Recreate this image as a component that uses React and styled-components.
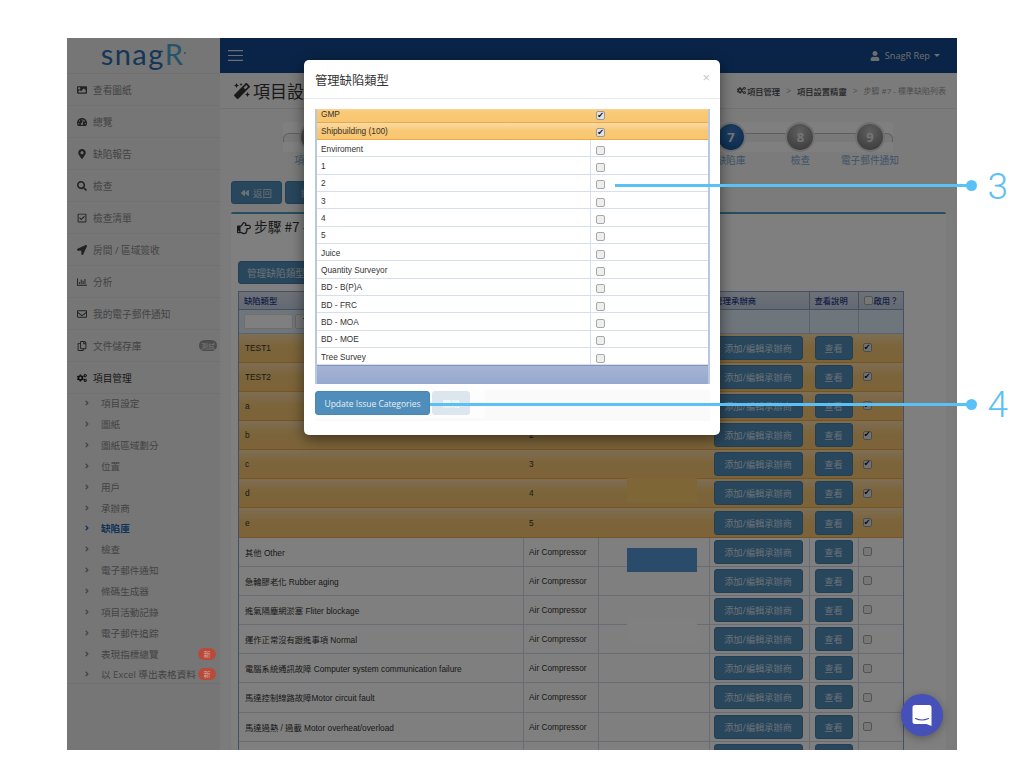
import React from "react";
import styled, { createGlobalStyle } from "styled-components";
import {
  FaImage, FaTachometerAlt, FaMapMarkerAlt, FaSearch, FaRegCheckSquare, FaLocationArrow,
  FaRegChartBar, FaRegEnvelope, FaRegCopy, FaCogs, FaMagic, FaRegHandPointRight,
  FaBackward, FaUser, FaAngleRight, FaFilter,
} from "react-icons/fa";

const CJK = `"Noto Sans CJK TC", sans-serif`;
const SANS = `"Liberation Sans", ${CJK}`;
const OPEN = `"Open Sans", ${CJK}`;

const Global = createGlobalStyle`
  html, body { margin: 0; padding: 0; background: #fff; }
  * { box-sizing: border-box; }
  #root { position: relative; width: 1024px; height: 768px; overflow: hidden; font-family: ${OPEN}; }
`;

const Frame = styled.div`
  position: relative; display: flex; width: 890px; height: 712px; margin: 38px 0 0 67px; overflow: hidden;
  background: #f6f6f6; isolation: isolate;
`;
const Sidebar = styled.aside`
  width: 153px; flex: none; background: #ececec; display: flex; flex-direction: column;
`;
const Logo = styled.div`
  height: 36px; flex: none; display: flex; justify-content: center; align-items: center; border-bottom: 1px solid #e0e0e0;
  font: 400 29px/36px Lato, sans-serif; letter-spacing: 1.4px; color: #2c6cb0; padding-bottom: 3px; overflow: visible;
  span { color: #4aa8d0; }
  i { width: 2px; height: 2px; border-radius: 50%; background: #4aa8d0; margin: 0 0 3px 0; }
`;
const NavItem = styled.div`
  height: 32px; flex: none; display: flex; align-items: center; padding: 0 3px 0 10px; gap: 6px;
  border-bottom: 1px solid #e2e2e2; font-size: 9.7px; color: ${p => p.$strong ? "#333" : "#888"};
  svg { width: 10px; height: 10px; flex: none; color: ${p => p.$strong ? "#222" : "#444"}; }
`;
const SubList = styled.div`
  display: flex; flex-direction: column; border-bottom: 1px solid #e2e2e2; height: 291px; flex: none;
  margin-top: -1px;
`;
const SubItem = styled.div`
  height: 20.85px; flex: none; display: flex; align-items: center; padding: 0 4px 0 16px; font-size: 9.6px;
  color: ${p => p.$active ? "#2266b0" : "#888"}; font-weight: ${p => p.$active ? 700 : 400};
  svg { width: 8px; height: 8px; margin-right: 10px; flex: none; }
`;
const Grow = styled.span`flex: 1;`;
const NavLabel = styled.span`white-space: nowrap; flex: 1;`;
const Badge = styled.span`
  flex: none; width: 18px; height: 11px; border-radius: 6px; display: flex; align-items: center; justify-content: center;
  font-size: 7px; color: #eee; background: #999;
`;
const RedBadge = styled(Badge)`
  position: relative; z-index: 6; background: #b84a3a; color: #d8a8a0; height: 12px;
`;
const Main = styled.main`flex: 1; min-width: 0; display: flex; flex-direction: column;`;
const TopBar = styled.header`
  height: 35px; flex: none; background: #12488f; display: flex; align-items: center; justify-content: space-between;
  padding: 0 17px 0 8px; color: #d8d8d8;
  svg { display: block; }
`;
const UserMenu = styled.div`
  display: flex; align-items: center; gap: 5px; font: 400 9.2px ${OPEN}; color: #ddd;
`;
const Caret = styled.i`
  width: 0; height: 0; border: 3px solid transparent; border-top-color: #ddd; border-bottom: 0; margin-left: -1px;
`;
const PageHead = styled.div`
  height: 36px; flex: none; display: flex; align-items: center; justify-content: space-between; border-bottom: 1px solid #e4e4e4;
  padding: 0 11px 0 14px; background: #f6f6f6;
`;
const PageTitle = styled.h1`
  margin: 0; font: 400 17px ${CJK}; color: #333; display: flex; align-items: center; gap: 3px;
  svg { width: 16px; height: 16px; }
`;
const Crumbs = styled.div`
  display: flex; align-items: center; gap: 6px; font-size: 8.3px; color: #999;
  b { font-weight: 500; color: #444; display: flex; align-items: center; gap: 1px; }
  svg { width: 9px; height: 9px; }
`;
const CrumbLast = styled.span`font-size: 8px;`;
const Stepper = styled.div`
  position: relative; height: 72px; flex: none; display: flex; padding: 15px 0 0 59.2px;
`;
const RailBand = styled.div`
  position: absolute; left: 63px; top: 13px; width: 610px; height: 30px; background: #ffffff; border-radius: 2px;
`;
const Rail = styled.div`
  position: absolute; left: 0; right: 0; top: 11px; height: 9px; border: 1px solid #bcbcbc; border-bottom: 0; border-radius: 6px 6px 0 0; background: #f2f2f2;
`;
const Step = styled.div`
  position: relative; width: 69.5px; flex: none; display: flex; flex-direction: column; align-items: center;
`;
const Circle = styled.div`
  width: 26px; height: 26px; border-radius: 50%; display: flex; align-items: center; justify-content: center;
  font: 700 13px ${OPEN}; color: #e8e8e8; box-shadow: 0 0 0 2px #e0e0e0;
  background: ${p => p.$on ? "radial-gradient(circle at 50% 30%, #3a7fc8, #124f96)" : "radial-gradient(circle at 50% 30%, #c0c0c0, #6c6c6c)"};
`;
const StepLabel = styled.div`margin-top: 3px; font-size: 9.7px; color: #7fa8d0; white-space: nowrap;`;
const Actions = styled.div`display: flex; gap: 3px; padding-left: 11px; height: 31px; flex: none;`;
const Btn = styled.button`
  font: 400 ${p => p.$fs || 9.4}px ${OPEN}; height: ${p => p.$h || 23}px; width: ${p => p.$w}px; flex: none; border: 1px solid #477fab; border-radius: 3px;
  background: #508cb9; color: rgba(255,255,255,.75); display: inline-flex; align-items: center; justify-content: center; gap: 4px; padding: 0; white-space: nowrap;
  svg { width: 8px; height: 8px; }
`;
const Panel = styled.section`
  flex: 1; margin: 0 11px; border-top: 2px solid #4a9fc0; background: #fff; padding: 0 7px; border-radius: 2px 2px 0 0; min-height: 0;
`;
const PanelTitle = styled.h2`
  margin: 0; height: 47px; padding-top: 2px; font: 400 13.7px ${CJK}; color: #333; display: flex; align-items: flex-start; gap: 3px;
  svg { width: 14px; height: 14px; margin-top: 5px; margin-left: -1px; }
`;
const ManageRow = styled.div`height: 30px; display: flex;`;
const Table = styled.div`
  width: 666px; min-height: 470px; border: 1px solid #8aa0d0; border-bottom: 0; font: 400 8.3px ${SANS}; color: #333;
`;
const cols = "284px 74.5px 111px 100px 49px 1fr";
const HeadRow = styled.div`
  display: grid; grid-template-columns: ${cols}; height: 17.5px; border-bottom: 1px solid #8aa0d0;
  background: linear-gradient(#dbe4f0, #c8d4e4); font: 500 8.3px ${CJK}; color: #2a3c90;
`;
const HeadCell = styled.div`
  display: flex; align-items: center; padding-left: 5px; border-left: ${p => p.$first ? 0 : 1}px solid #8fa0ba; gap: 1px;
`;
const FilterRow = styled.div`
  display: grid; grid-template-columns: ${cols}; height: 24px; background: #dceaf6; border-bottom: 1px solid #b8c4d6;
`;
const FilterCell = styled.div`
  display: flex; align-items: center; gap: 2px; padding-left: 5px; border-left: ${p => p.$first ? 0 : 1}px solid #b8c4d6;
`;
const FilterInput = styled.div`width: 49px; height: 15px; background: #fff; border: 1px solid #ddd; border-radius: 2px;`;
const FilterBtn = styled.div`
  width: 22px; height: 15px; background: #eee; border: 1px solid #ccc; border-radius: 2px; display: flex; align-items: center; justify-content: center;
  svg { width: 7px; height: 7px; color: #333; }
`;
const amber = "linear-gradient(#fbdca8, #f9c976 45%, #f8c670)";
const Row = styled.div`
  display: grid; grid-template-columns: ${cols}; height: 29.17px; background: ${p => p.$amber ? amber : "#fff"};
  border-bottom: 1px solid ${p => p.$amber ? "#eea848" : "#d2d8e6"};
`;
const Cell = styled.div`
  display: flex; align-items: center; padding-left: ${p => p.$pl ?? 5}px; min-width: 0; white-space: nowrap;
  border-left: ${p => p.$line ? "1px solid #d2d8e6" : "1px solid transparent"};
`;
const Check = styled.span`
  width: 9px; height: 9px; border-radius: 2px; flex: none; border: 1px solid ${p => p.$on ? "#999" : "#a8a8a8"}; background: ${p => p.$on ? "#e2e2e2" : "#eee"};
  display: inline-flex; align-items: center; justify-content: center; color: #111; font-size: 8px; line-height: 1; font-family: "DejaVu Sans", sans-serif;
`;
const Overlay = styled.div`position: absolute; inset: 0; background: rgba(0,0,0,.5); z-index: 5;`;
const Modal = styled.div`
  position: absolute; z-index: 7; left: 237px; top: 22px; width: 416px; height: 375px; background: #fff; border-radius: 5px;
  box-shadow: 0 4px 14px rgba(0,0,0,.5); display: flex; flex-direction: column;
`;
const ModalHead = styled.div`
  height: 39px; flex: none; display: flex; justify-content: space-between; align-items: flex-start; padding: 11px 10px 0 11px; border-bottom: 1px solid #e6e9ee;
`;
const ModalTitle = styled.h3`margin: 0; font: 400 12.3px ${CJK}; color: #333; line-height: 18px;`;
const Close = styled.span`font: 400 13px "Liberation Sans", sans-serif; color: #c8c8c8; line-height: 14px;`;
const ModalBody = styled.div`padding: 10px 10px 0 11px;`;
const MTableClip = styled.div`
  width: 395px; height: 275px; overflow: hidden; border-left: 2px solid #b8c8e0; border-right: 2px solid #b8c8e0; display: flex; flex-direction: column;
  font: 400 8.3px ${SANS}; color: #333;
`;
const MRow = styled.div`
  height: 17.33px; flex: none; display: grid; grid-template-columns: 273px 1fr; align-items: stretch;
  background: ${p => p.$amber ? amber : "#fff"}; border-bottom: 1px solid ${p => p.$amber ? "#eea848" : "#d8dfec"};
  margin-top: ${p => p.$clip ? "-3.6px" : 0};
`;
const MLabel = styled.div`display: flex; align-items: center; padding-left: 4px; padding-top: 1px;`;
const MCheck = styled.div`display: flex; align-items: center; padding-left: 5px; padding-top: 4px; border-left: 1px solid ${p => p.$amber ? "transparent" : "#d8dfec"};`;
const MFoot = styled.div`flex: 1; background: linear-gradient(#a4b4d6, #96a8cc); border-top: 1px solid #8296bc;`;
const FootBand = styled.div`
  margin-top: 6px; width: 395px; height: 31px; background: #fafafa;
`;
const FootInner = styled.div`
  width: 170px; height: 28px; background: #fdfdfd; display: flex; gap: 2px;
`;
const Update = styled(Btn)`border-color: #4a86b4; color: #e8eff5; background: #4f8dba; height: 24px; font-size: 8.5px; margin-top: 1px;`;
const Disabled = styled(Update)`background: #dce6ef; border-color: #dce6ef; color: #fff; font-family: ${CJK}; font-size: 8.5px;`;
const Chat = styled.div`
  position: absolute; z-index: 7; left: 834px; top: 656px; width: 42px; height: 42px; border-radius: 50%; background: #4550b8;
  box-shadow: 0 2px 8px rgba(0,0,0,.3); display: flex; align-items: center; justify-content: center;
`;
const Callout = styled.div`
  position: absolute; left: ${p => p.$x}px; top: ${p => p.$y}px; width: ${p => 1008 - p.$x}px; height: 40px; display: flex; align-items: center;
`;
const Line = styled.div`flex: 1; height: 3px; background: #5ac1f6;`;
const Dot = styled.div`width: 11px; height: 11px; border-radius: 50%; background: #5ac1f6; margin-left: -1px; flex: none;`;
const Num = styled.div`width: 31px; flex: none; text-align: right; font: 300 37px/40px Roboto, sans-serif; color: #5ac1f6; margin-top: 2px;`;
const Swatch = styled.div`position: absolute; z-index: 8; left: ${p => p.$x}px; top: ${p => p.$y}px; width: 70px; height: 24px; background: ${p => p.$c};`;

const nav = [
  [FaImage, "查看圖紙"], [FaTachometerAlt, "總覽"], [FaMapMarkerAlt, "缺陷報告"], [FaSearch, "檢查"],
  [FaRegCheckSquare, "檢查清單"], [FaLocationArrow, "房間 / 區域簽收"], [FaRegChartBar, "分析"],
  [FaRegEnvelope, "我的電子郵件通知"], [FaRegCopy, "文件儲存庫", "測試"], [FaCogs, "項目管理"],
];
const subs = ["項目設定", "圖紙", "圖紙區域劃分", "位置", "用戶", "承辦商", "缺陷庫", "檢查", "電子郵件通知", "條碼生成器", "項目活動記錄", "電子郵件追踪", "表現指標總覽", "以 Excel 導出表格資料"];
const steps = ["項目設定", "圖紙", "位置", "用戶", "承辦商", "分析", "缺陷庫", "檢查", "電子郵件通知"];
const rows = [
  ["TEST1", "", 1], ["TEST2", "", 1], ["a", "1", 1], ["b", "2", 1], ["c", "3", 1], ["d", "4", 1], ["e", "5", 1],
  ["其他 Other", "Air Compressor"], ["急輪膠老化 Rubber aging", "Air Compressor"], ["進氣隔塵網淤塞 Fliter blockage", "Air Compressor"],
  ["運作正常沒有跟進事項 Normal", "Air Compressor"], ["電腦系統通訊故障 Computer system communication failure", "Air Compressor"],
  ["馬達控制線路故障Motor circuit fault", "Air Compressor"], ["馬達過熱 / 過載 Motor overheat/overload", "Air Compressor"], ["", ""],
];
const mrows = [["GMP", 1], ["Shipbuilding (100)", 1], ["Enviroment"], ["1"], ["2"], ["3"], ["4"], ["5"], ["Juice"], ["Quantity Surveyor"], ["BD - B(P)A"], ["BD - FRC"], ["BD - MOA"], ["BD - MOE"], ["Tree Survey"]];

export default function App() {
  return (
    <>
      <Global />
      <Frame>
        <Sidebar>
          <Logo>snag<span>R</span><i /></Logo>
          {nav.map(([I, t, b], i) => (
            <NavItem key={t} $strong={i === 9}>
              <I /><NavLabel>{t}</NavLabel>{b && <Badge>{b}</Badge>}
            </NavItem>
          ))}
          <SubList>
            {subs.map((s, i) => (
              <SubItem key={s + i} $active={i === 6}>
                <FaAngleRight /><NavLabel>{s}</NavLabel>{i >= 12 && <RedBadge>新</RedBadge>}
              </SubItem>
            ))}
          </SubList>
          <Grow />
        </Sidebar>
        <Main>
          <TopBar>
            <svg width="15" height="11" viewBox="0 0 15 11" stroke="#d4dcea" strokeWidth="1.2">
              <path d="M0 .6h15M0 5.500h15M0 10.400h15" />
            </svg>
            <UserMenu><FaUser size={10} color="#ddd" />SnagR Rep<Caret /></UserMenu>
          </TopBar>
          <PageHead>
            <PageTitle><FaMagic />項目設定</PageTitle>
            <Crumbs>
              <b><FaCogs />項目管理</b><span>&gt;</span><b>項目設置精靈</b><span>&gt;</span><CrumbLast>步驟 #7 - 標準缺陷列表</CrumbLast>
            </Crumbs>
          </PageHead>
          <Stepper>
            <RailBand><Rail /></RailBand>
            {steps.map((s, i) => (
              <Step key={s}>
                <Circle $on={i === 6}>{i + 1}</Circle>
                <StepLabel>{s}</StepLabel>
              </Step>
            ))}
          </Stepper>
          <Actions>
            <Btn $w={51}><FaBackward />返回</Btn>
            <Btn $w={51}>繼續</Btn>
          </Actions>
          <Panel>
            <PanelTitle><FaRegHandPointRight />步驟 #7 - 標準缺陷列表</PanelTitle>
            <ManageRow><Btn $w={76} $fs={9.7}>管理缺陷類型</Btn></ManageRow>
            <Table>
              <HeadRow>
                <HeadCell $first>缺陷類型</HeadCell><HeadCell>類別</HeadCell><HeadCell>分類</HeadCell>
                <HeadCell>管理承辦商</HeadCell><HeadCell>查看說明</HeadCell>
                <HeadCell><Check />啟用？</HeadCell>
              </HeadRow>
              <FilterRow>
                <FilterCell $first><FilterInput /><FilterBtn><FaFilter /></FilterBtn></FilterCell>
                <FilterCell /><FilterCell /><FilterCell /><FilterCell /><FilterCell />
              </FilterRow>
              {rows.map(([a, b, on], i) => (
                <Row key={i} $amber={!!on}>
                  <Cell $pl={5}>{a}</Cell>
                  <Cell $line={!on}>{b}</Cell>
                  <Cell $line={!on} />
                  <Cell $line={!on} $pl={4}><Btn $w={89} $h={24} $fs={9.2}>添加/編輯承辦商</Btn></Cell>
                  <Cell $line={!on} $pl={5}><Btn $w={38} $h={24} $fs={9.2}>查看</Btn></Cell>
                  <Cell $line={!on} $pl={4}><Check $on={!!on}>{on ? "✔" : ""}</Check></Cell>
                </Row>
              ))}
            </Table>
          </Panel>
        </Main>
        <Overlay />
        <Swatch $x={560} $y={440} $c="rgb(127,102,55)" />
        <Swatch $x={560} $y={510} $c="rgb(42,75,105)" />
        <Swatch $x={560} $y={580} $c="rgb(128,128,128)" />
        <Swatch $x={700} $y={5} $c="rgb(10,36,72)" />
        <Modal>
          <ModalHead><ModalTitle>管理缺陷類型</ModalTitle><Close>×</Close></ModalHead>
          <ModalBody>
            <MTableClip>
              {mrows.map(([t, on], i) => (
                <MRow key={t} $amber={!!on} $clip={i === 0}>
                  <MLabel>{t}</MLabel>
                  <MCheck $amber={!!on}><Check $on={!!on}>{on ? "✔" : ""}</Check></MCheck>
                </MRow>
              ))}
              <MFoot />
            </MTableClip>
            <FootBand>
              <FootInner>
                <Update $w={115}>Update Issue Categories</Update>
                <Disabled $w={38}>關閉</Disabled>
              </FootInner>
            </FootBand>
          </ModalBody>
        </Modal>
        <Chat>
          <svg width="20" height="23" viewBox="0 0 20 23">
            <path d="M3 1h14a2.500 2.500 0 0 1 2.500 2.500V22l-5-2H3A2.500 2.500 0 0 1 .5 17.500V3.500A2.500 2.500 0 0 1 3 1z" fill="#fff" />
            <path d="M3.500 14.500c4 1.800 9 1.800 13 0" fill="none" stroke="#4550b8" strokeWidth="1.100" strokeLinecap="round" />
          </svg>
        </Chat>
      </Frame>
      <Callout $x={615} $y={165.5}><Line /><Dot /><Num>3</Num></Callout>
      <Callout $x={430} $y={384}><Line /><Dot /><Num>4</Num></Callout>
    </>
  );
}
